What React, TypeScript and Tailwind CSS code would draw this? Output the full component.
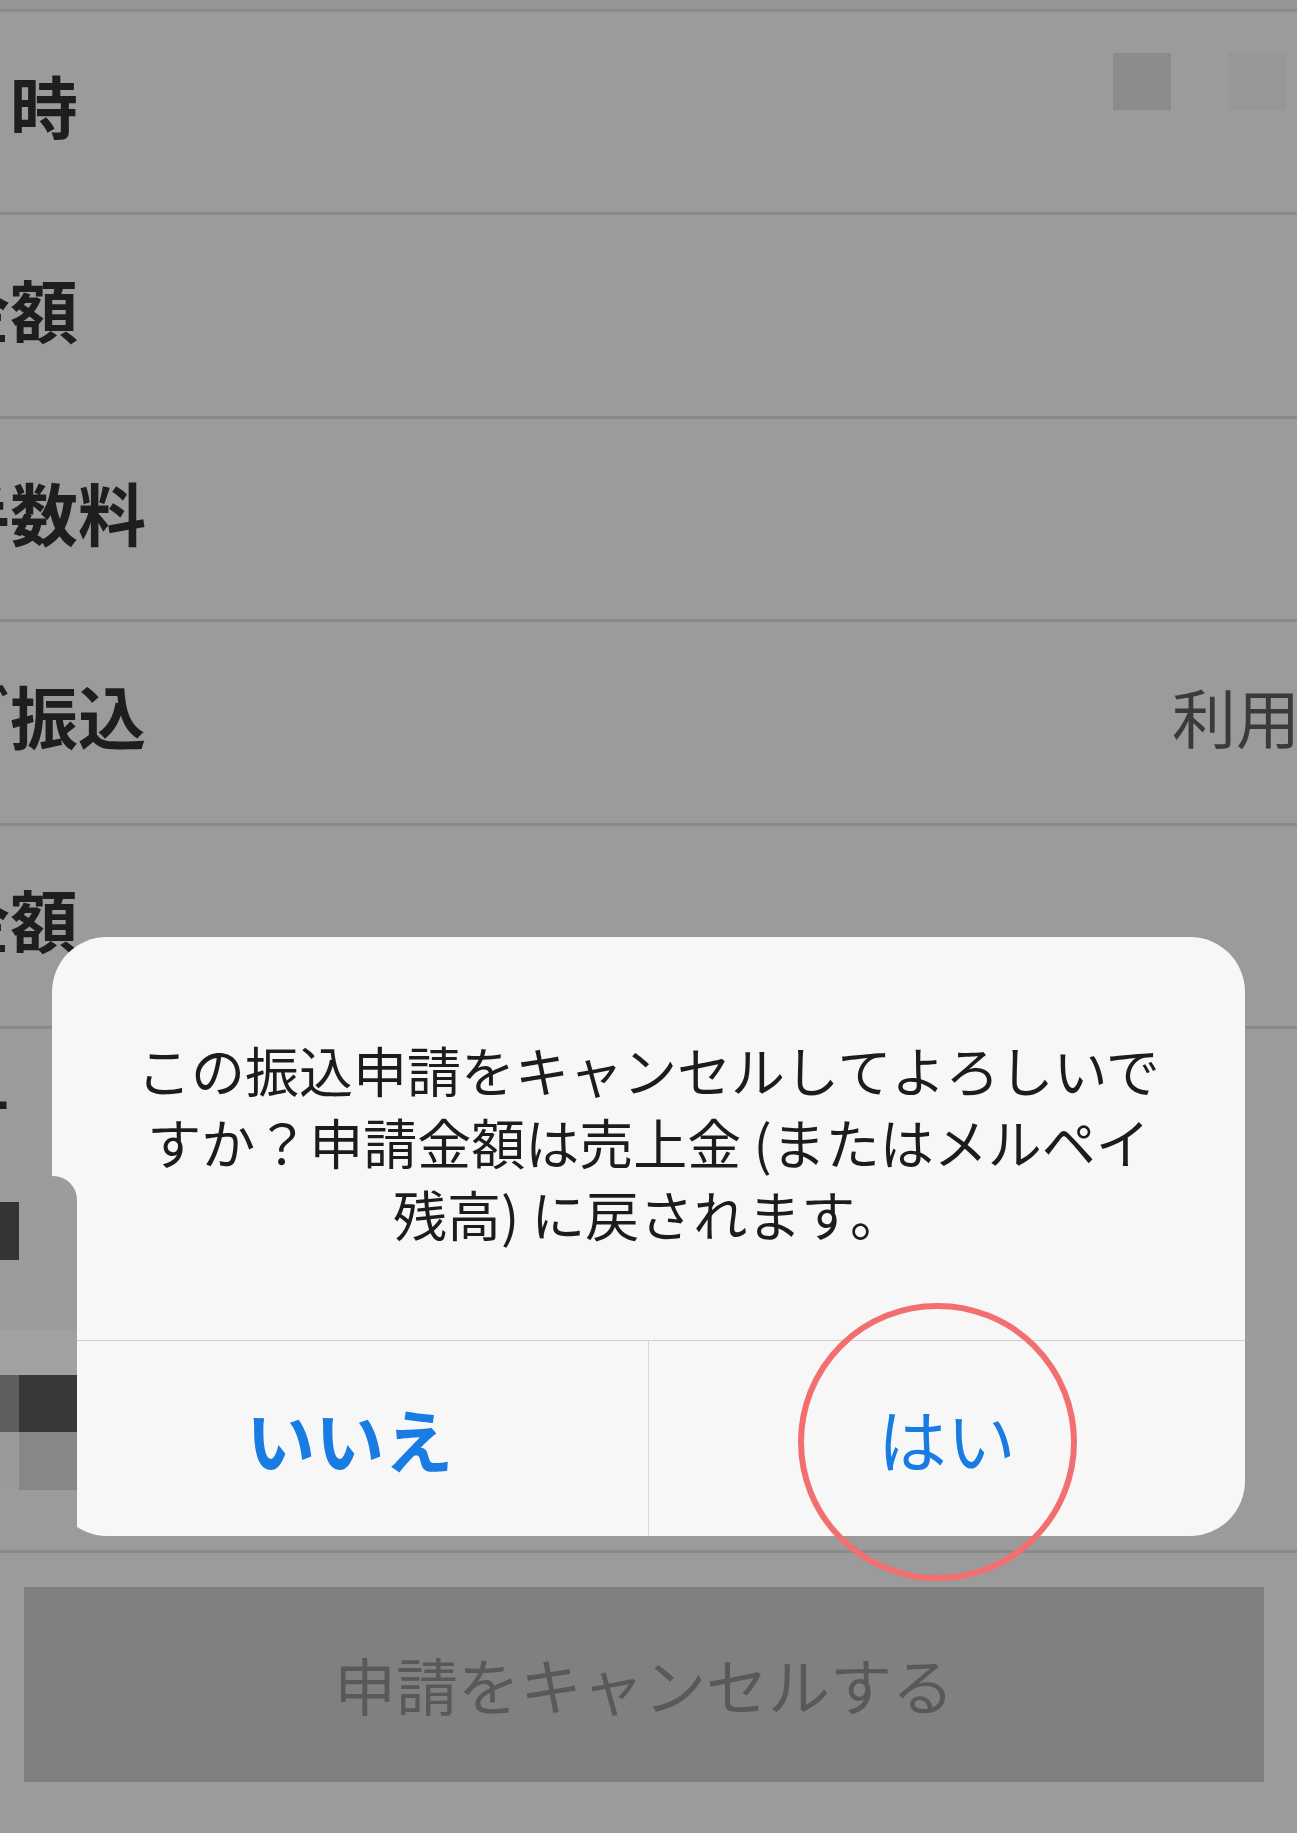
function Row({ label, offset, value, first }: { label: string; offset: string; value?: string; first?: boolean }) {
  return (
    <div className="flex h-[203.4px] w-[1520px] items-center border-b-[3px] border-[#8a8a8a]">
      <span className={`${offset} mb-[14px] whitespace-nowrap text-[68px] font-bold leading-none text-[#1e1e1e]`}>{label}</span>
      {first && (
        <div className="ml-auto mr-[234px] mb-[62px] flex gap-[57px]">
          <div className="h-[57px] w-[58px] bg-[#8b8b8b]" />
          <div className="h-[57px] w-[58px] bg-[#979797]" />
        </div>
      )}
      {value && (
        <span className="ml-auto mr-[28px] mb-[14px] whitespace-nowrap text-[64px] leading-none text-[#3a3a3a]">{value}</span>
      )}
    </div>
  );
}

export default function App() {
  return (
    <div
      className="relative h-[1833px] w-[1297px] overflow-hidden bg-[#9b9b9b]"
      style={{ fontFamily: '"Noto Sans CJK JP", "Noto Sans", sans-serif' }}
    >
      {/* list */}
      <div className="h-[9px] bg-[#959595]" />
      <div className="h-[3px] bg-[#8a8a8a]" />
      <Row label="日時" offset="ml-[-58px]" first />
      <Row label="振込金額" offset="ml-[-194px]" />
      <Row label="手数料" offset="ml-[-58px]" />
      <Row label="お急ぎ振込" offset="ml-[-194px]" value="利用しない" />
      <Row label="振込金額" offset="ml-[-194px]" />
      <div className="h-[524px] border-b-[3px] border-[#8a8a8a] pt-[40px]">
        <span className="ml-[-262px] whitespace-nowrap text-[68px] font-bold leading-none text-[#1e1e1e]">口座番号</span>
      </div>
      <div className="pl-[24px] pt-[34px]">
        <div className="flex h-[195px] w-[1240px] items-center justify-center bg-[#808080]">
          <span className="text-[62px] leading-none text-[#595959]">申請をキャンセルする</span>
        </div>
      </div>

      {/* alert */}
      <div className="absolute left-[52px] top-[937px] flex h-[599px] w-[1193px] flex-col overflow-hidden rounded-[55px] bg-[#f7f7f7]">
        <div className="h-[403px] pt-[97px] text-center text-[54px] leading-[72px] text-[#1c1c1c]">
          この振込申請をキャンセルしてよろしいで
          <br />
          すか？申請金額は売上金 (またはメルペイ
          <br />
          残高) に戻されます。
        </div>
        <div className="flex flex-1 border-t-[1.5px] border-[#cfcfcf]">
          <div className="flex w-1/2 items-center justify-center border-r-[1.5px] border-[#d8d8d8]">
            <span className="text-[69px] font-bold leading-none text-[#187ce2]">いいえ</span>
          </div>
          <div className="flex w-1/2 items-center justify-center">
            <span className="text-[69px] leading-none text-[#187ce2]">はい</span>
          </div>
        </div>
      </div>

      {/* mosaic cover */}
      <div className="absolute left-0 top-[1176px] flex h-[364px] w-[77px] flex-col rounded-tr-[24px] bg-[#9c9c9c]">
        <div className="h-[26px]" />
        <div className="h-[58px] w-[19px] bg-[#343434]" />
        <div className="h-[70px]" />
        <div className="h-[45px] bg-[#a1a1a1]" />
        <div className="flex h-[57px]">
          <div className="w-[19px] bg-[#5f5f5f]" />
          <div className="flex-1 bg-[#383838]" />
        </div>
        <div className="flex h-[58px]">
          <div className="w-[19px] bg-[#9a9a9a]" />
          <div className="flex-1 bg-[#878787]" />
        </div>
      </div>

      {/* annotation */}
      <div className="absolute left-[798px] top-[1303px] h-[278px] w-[279px] rounded-full border-[6px] border-[#f36e6e]" />
    </div>
  );
}
